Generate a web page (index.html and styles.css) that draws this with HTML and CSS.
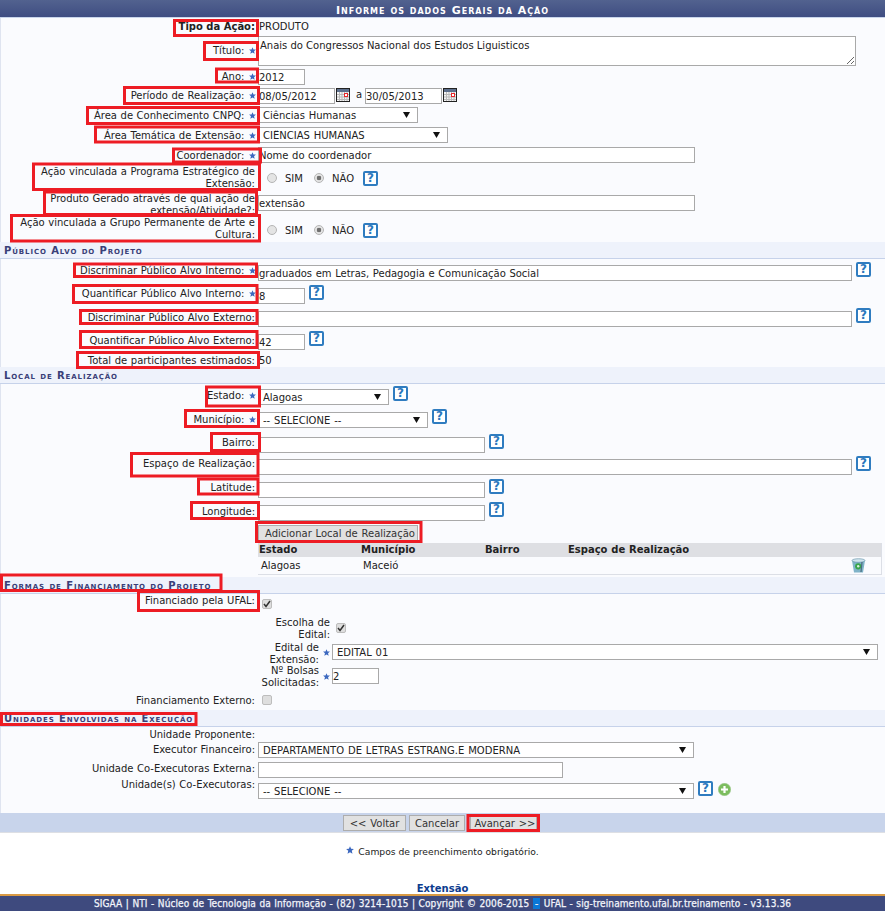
FILE: index.html
```html
<!DOCTYPE html>
<html lang="pt-BR">
<head>
<meta charset="utf-8">
<title>Informe os dados Gerais da Ação</title>
<link rel="stylesheet" href="styles.css">
</head>
<body>
<svg class="defs" width="0" height="0" aria-hidden="true">
  <symbol id="star" viewBox="0 0 10 10"><path d="M5 0.2 6.4 3.4 9.9 3.7 7.2 6 8.1 9.6 5 7.7 1.9 9.6 2.8 6 .1 3.7 3.6 3.4Z" fill="#3c68bf"/></symbol>
  <symbol id="cal" viewBox="0 0 14 14"><rect x=".5" y=".5" width="13" height="13" fill="#f4f4f4" stroke="#222"/><rect x="1" y="1" width="12" height="3" fill="#5d6f8c"/><path d="M1 6.5h12M1 9h12M1 11.5h12M3.5 4v9M6 4v9M8.500 4v9M11 4v9" stroke="#b9b9b9"/><rect x="8" y="5" width="4" height="4" fill="#e8262a"/><rect x="9" y="6" width="2" height="2" fill="#fff"/></symbol>
  <symbol id="plus" viewBox="0 0 13 13"><circle cx="6.500" cy="6.500" r="6.200" fill="#7cbd5e" stroke="#9fc98f" stroke-width=".6"/><path d="M6.500 3v7M3 6.500h7" stroke="#fff" stroke-width="2.200"/></symbol>
  <symbol id="trash" viewBox="0 0 15 15"><path d="M1 2.500 14 2.500 12 14.500 3 14.500Z" fill="#7fb3c8"/><ellipse cx="7.500" cy="2.500" rx="6.500" ry="1.800" fill="#cfe4ee" stroke="#5f8ea3" stroke-width=".6"/><circle cx="7.200" cy="8.300" r="3.100" fill="#38a54a"/><circle cx="7.200" cy="8.300" r="1.200" fill="#d8f0dc"/><path d="M11 4 10 14" stroke="#4c6f80" stroke-width="1.200"/></symbol>
</svg>

<main class="page">
  <form class="panel">
    <h1 class="caption">Informe os dados Gerais da Ação</h1>

    <div class="row r-tipo"><div class="lab strong">Tipo da Ação:</div><div class="fld val">PRODUTO</div></div>
    <div class="row r-titulo"><div class="lab">Título: <svg class="star"><use href="#star"/></svg></div><div class="fld"><textarea class="area">Anais do Congressos Nacional dos Estudos Liguisticos</textarea></div></div>
    <div class="row r-ano"><div class="lab">Ano: <svg class="star"><use href="#star"/></svg></div><div class="fld"><input class="in w47" value="2012"></div></div>
    <div class="row r-periodo"><div class="lab">Período de Realização: <svg class="star"><use href="#star"/></svg></div><div class="fld"><input class="in w77" value="08/05/2012"><svg class="cal"><use href="#cal"/></svg><span class="ate">a</span><input class="in w77" value="30/05/2013"><svg class="cal"><use href="#cal"/></svg></div></div>
    <div class="row r-area"><div class="lab">Área de Conhecimento CNPQ: <svg class="star"><use href="#star"/></svg></div><div class="fld"><select class="sel w160"><option>Ciências Humanas</option></select></div></div>
    <div class="row r-tema"><div class="lab">Área Temática de Extensão: <svg class="star"><use href="#star"/></svg></div><div class="fld"><select class="sel w190"><option>CIÊNCIAS HUMANAS</option></select></div></div>
    <div class="row r-coord"><div class="lab">Coordenador: <svg class="star"><use href="#star"/></svg></div><div class="fld"><input class="in w437" value="Nome do coordenador"></div></div>
    <div class="row r-acao"><div class="lab">Ação vinculada a Programa Estratégico de<br>Extensão:</div><div class="fld radios"><input type="radio" class="rad" name="a1"><span class="opt">SIM</span><input type="radio" class="rad rad2" name="a1" checked><span class="opt">NÃO</span><span class="help h-radio">?</span></div></div>
    <div class="row r-produto"><div class="lab">Produto Gerado através de qual ação de<br>extensão/Atividade?:</div><div class="fld"><input class="in w437" value="extensão"></div></div>
    <div class="row r-grupo"><div class="lab">Ação vinculada a Grupo Permanente de Arte e<br>Cultura:</div><div class="fld radios"><input type="radio" class="rad" name="a2"><span class="opt">SIM</span><input type="radio" class="rad rad2" name="a2" checked><span class="opt">NÃO</span><span class="help h-radio">?</span></div></div>

    <h2 class="band">Público Alvo do Projeto</h2>
    <div class="row r-dint"><div class="lab">Discriminar Público Alvo Interno: <svg class="star"><use href="#star"/></svg></div><div class="fld"><input class="in w594" value="graduados em Letras, Pedagogia e Comunicação Social"><span class="help">?</span></div></div>
    <div class="row r-qint"><div class="lab">Quantificar Público Alvo Interno: <svg class="star"><use href="#star"/></svg></div><div class="fld"><input class="in w47" value="8"><span class="help">?</span></div></div>
    <div class="row r-dext"><div class="lab">Discriminar Público Alvo Externo:</div><div class="fld"><input class="in w594"><span class="help">?</span></div></div>
    <div class="row r-qext"><div class="lab">Quantificar Público Alvo Externo:</div><div class="fld"><input class="in w47" value="42"><span class="help">?</span></div></div>
    <div class="row r-total"><div class="lab">Total de participantes estimados:</div><div class="fld val">50</div></div>

    <h2 class="band">Local de Realização</h2>
    <div class="row r-estado"><div class="lab">Estado: <svg class="star"><use href="#star"/></svg></div><div class="fld"><select class="sel w131"><option>Alagoas</option></select><span class="help">?</span></div></div>
    <div class="row r-mun"><div class="lab">Município: <svg class="star"><use href="#star"/></svg></div><div class="fld"><select class="sel w170"><option>-- SELECIONE --</option></select><span class="help">?</span></div></div>
    <div class="row r-bairro"><div class="lab">Bairro:</div><div class="fld"><input class="in w227"><span class="help">?</span></div></div>
    <div class="row r-espaco"><div class="lab">Espaço de Realização:</div><div class="fld"><input class="in w594"><span class="help">?</span></div></div>
    <div class="row r-lat"><div class="lab">Latitude:</div><div class="fld"><input class="in w227"><span class="help">?</span></div></div>
    <div class="row r-lon"><div class="lab">Longitude:</div><div class="fld"><input class="in w227"><span class="help">?</span></div></div>
    <div class="row r-add"><div class="lab"></div><div class="fld"><button type="button" class="btn b-add">Adicionar Local de Realização</button></div></div>
    <div class="row r-tab"><div class="lab"></div><div class="fld">
      <table class="locais">
        <thead><tr><th class="c1">Estado</th><th class="c2">Município</th><th class="c3">Bairro</th><th class="c4">Espaço de Realização</th><th class="c5"></th></tr></thead>
        <tbody><tr><td class="c1">Alagoas</td><td class="c2">Maceió</td><td></td><td></td><td class="c5"><svg class="trash"><use href="#trash"/></svg></td></tr></tbody>
      </table>
    </div></div>

    <h2 class="band">Formas de Financiamento do Projeto</h2>
    <div class="row r-fin"><div class="lab">Financiado pela UFAL:</div><div class="fld"><input type="checkbox" class="chk" checked></div></div>
    <div class="row sub r-esc"><div class="lab lab-a">Escolha de<br>Edital:</div><div class="fld fld-a"><input type="checkbox" class="chk" checked></div></div>
    <div class="row sub r-edi"><div class="lab lab-b">Edital de<br>Extensão: </div><svg class="star star-b"><use href="#star"/></svg><div class="fld fld-b"><select class="sel w546"><option>EDITAL 01</option></select></div></div>
    <div class="row sub r-bol"><div class="lab lab-b">Nº Bolsas<br>Solicitadas: </div><svg class="star star-b"><use href="#star"/></svg><div class="fld fld-b"><input class="in w47" value="2"></div></div>
    <div class="row r-fext"><div class="lab">Financiamento Externo:</div><div class="fld"><input type="checkbox" class="chk"></div></div>

    <h2 class="band">Unidades Envolvidas na Execução</h2>
    <div class="row r-prop"><div class="lab">Unidade Proponente:</div><div class="fld"></div></div>
    <div class="row r-exec"><div class="lab">Executor Financeiro:</div><div class="fld"><select class="sel w436"><option>DEPARTAMENTO DE LETRAS ESTRANG.E MODERNA</option></select></div></div>
    <div class="row r-coex"><div class="lab">Unidade Co-Executoras Externa:</div><div class="fld"><input class="in w305"></div></div>
    <div class="row r-unid"><div class="lab">Unidade(s) Co-Executoras:</div><div class="fld"><select class="sel w436"><option>-- SELECIONE --</option></select><span class="help h-unid">?</span><svg class="plus"><use href="#plus"/></svg></div></div>

    <div class="bar">
      <button type="button" class="btn b-volta">&lt;&lt; Voltar</button>
      <button type="button" class="btn b-canc">Cancelar</button>
      <button type="button" class="btn b-avan">Avançar &gt;&gt;</button>
    </div>
  </form>

  <p class="note"><svg class="star star-n"><use href="#star"/></svg><span>Campos de preenchimento obrigatório.</span></p>
  <p class="modulo">Extensão</p>
  <footer class="foot">SIGAA | NTI - Núcleo de Tecnologia da Informação - (82) 3214-1015 | Copyright © 2006-2015 <span class="hl">-</span> UFAL - sig-treinamento.ufal.br.treinamento - v3.13.36</footer>
</main>

<svg class="marks" width="891" height="911" aria-hidden="true">
  <rect x="174.500" y="20.500" width="83" height="15"/>
  <rect x="204.500" y="42.500" width="53" height="17"/>
  <rect x="216.500" y="69" width="41" height="13"/>
  <rect x="124.500" y="87.500" width="134" height="16"/>
  <rect x="87.500" y="107.500" width="171" height="16"/>
  <rect x="95.500" y="127" width="163" height="15"/>
  <rect x="173.500" y="149" width="87" height="13"/>
  <rect x="33.500" y="164" width="226" height="25.500"/>
  <rect x="44.500" y="192" width="212" height="22.500"/>
  <rect x="11.500" y="215.500" width="248" height="25.500"/>
  <rect x="74.500" y="264" width="182" height="12.500"/>
  <rect x="73.500" y="285.500" width="183.500" height="17"/>
  <rect x="80.500" y="310.500" width="176.500" height="13"/>
  <rect x="80.500" y="331.500" width="176.500" height="16"/>
  <rect x="77.500" y="352.500" width="181" height="15"/>
  <rect x="206.500" y="387" width="53" height="19"/>
  <rect x="185.500" y="410.500" width="73" height="16"/>
  <rect x="211.500" y="433.500" width="48" height="17"/>
  <rect x="131.500" y="453.500" width="126.500" height="22.500"/>
  <rect x="198.500" y="479" width="59.500" height="15"/>
  <rect x="191.500" y="502.500" width="67" height="16"/>
  <rect x="256.500" y="522.500" width="164.500" height="19"/>
  <rect x="1.500" y="575" width="219.500" height="15.500"/>
  <rect x="138.500" y="591.500" width="120" height="19"/>
  <rect x="1.500" y="713.500" width="194.500" height="11"/>
  <rect x="468" y="815.500" width="70.500" height="15"/>
</svg>
</body>
</html>
```

FILE: styles.css
```css
* { box-sizing: border-box; }
html, body { margin: 0; padding: 0; background: #fff; }
body { width: 891px; height: 911px; overflow: hidden; position: relative; font: 10px/12px "DejaVu Sans", Verdana, sans-serif; color: #222; }
.defs { position: absolute; }
.page { width: 885px; display: flex; flex-direction: column; }
.panel { background: #fafbfe; box-shadow: inset 1px 0 #dfe4f0; height: 833px; display: flex; flex-direction: column; }

.caption { margin: 0; height: 18px; font: small-caps bold 11px/21px "DejaVu Sans", Verdana, sans-serif; letter-spacing: 1px; color: #fff; text-align: center; background: linear-gradient(#52628f, #3f4d82); border-bottom: 1px solid #c9d5eb; }
.band { margin: 0; height: 17px; padding-left: 4px; font: small-caps bold 10px/17px "DejaVu Sans", Verdana, sans-serif; letter-spacing: .9px; color: #3a3f78; background: #eef2fb; border-bottom: 1px solid #c6d2ea; }

.row { display: grid; grid-template-columns: 258px 1fr; align-items: start; flex: none; height: var(--h); }
.lab { margin-top: var(--l); padding-right: 3px; text-align: right; white-space: nowrap; word-spacing: .4px; }
.strong { font-weight: bold; word-spacing: 0; }
.fld { margin-top: var(--f); display: flex; align-items: flex-start; }
.val { padding-left: 1px; }

.r-tipo { --h: 18px; --l: 3px; --f: 3px; }
.r-titulo { --h: 31px; --l: 9px; --f: 0px; }
.r-ano { --h: 19px; --l: 4px; --f: 2px; }
.r-periodo { --h: 19px; --l: 4px; --f: 2px; }
.r-area { --h: 20px; --l: 5px; --f: 2px; }
.r-tema { --h: 20px; --l: 5px; --f: 2px; }
.r-coord { --h: 20px; --l: 5px; --f: 2px; }
.r-acao { --h: 27px; --l: 1px; --f: 5px; }
.r-produto { --h: 23px; --l: 1px; --f: 3px; }
.r-grupo { --h: 27px; --l: 2px; --f: 7px; }
.r-dint { --h: 24px; --l: 6px; --f: 6px; }
.r-qint { --h: 25px; --l: 5px; --f: 5px; }
.r-dext { --h: 23px; --l: 4px; --f: 3px; }
.r-qext { --h: 21px; --l: 4px; --f: 3px; }
.r-total { --h: 15px; --l: 3px; --f: 3px; }
.r-estado { --h: 25px; --l: 6px; --f: 5px; }
.r-mun { --h: 25px; --l: 5px; --f: 3px; }
.r-bairro { --h: 23px; --l: 3px; --f: 3px; }
.r-espaco { --h: 23px; --l: 1px; --f: 2px; }
.r-lat { --h: 23px; --l: 2px; --f: 2px; }
.r-lon { --h: 20px; --l: 3px; --f: 2px; }
.r-add { --h: 20px; --l: 0px; --f: 2px; }
.r-tab { --h: 34px; --l: 0px; --f: 0px; }
.r-fin { --h: 21px; --l: 1px; --f: 5px; }
.r-esc { --h: 26px; --l: 2px; --f: 8px; }
.r-edi { --h: 24px; --l: 1px; --f: 3px; }
.r-bol { --h: 26px; --l: 0px; --f: 3px; }
.r-fext { --h: 19px; --l: 4px; --f: 4px; }
.r-prop { --h: 14px; --l: 2px; --f: 0px; }
.r-exec { --h: 19px; --l: 3px; --f: 1px; }
.r-coex { --h: 22px; --l: 3px; --f: 2px; }
.r-unid { --h: 31px; --l: -3px; --f: 1px; }

.sub { grid-template-columns: 319px 13px 1fr; }
.r-esc { grid-template-columns: 336px 1fr; }
.lab-a { padding-right: 6px; }
.lab-b { padding-right: 0; }

input, textarea, select, button { font: 10px/12px "DejaVu Sans", Verdana, sans-serif; color: #222; margin: 0; }
.in, .area, .sel { background: #fff; border: 1px solid #a9a9a9; border-radius: 0; outline: 0; flex: none; }
.in { height: 16px; padding: 1px 0 0 0; word-spacing: .4px; }
.area { display: block; width: 598px; height: 30px; padding: 3px 1px; resize: both; }
.sel { height: 16px; padding: 2px 12px 0 4px; word-spacing: .7px; appearance: none; background-image: url("data:image/svg+xml,%3Csvg xmlns='http://www.w3.org/2000/svg' width='7' height='6'%3E%3Cpath d='M0 0h7L3.500 6z' fill='%23111'/%3E%3C/svg%3E"); background-repeat: no-repeat; background-position: right 7px center; }
.w47 { width: 47px; }
.w77 { width: 77px; }
.w131 { width: 131px; }
.w160 { width: 160px; }
.w170 { width: 170px; }
.w190 { width: 190px; }
.w227 { width: 227px; }
.w305 { width: 305px; }
.w436 { width: 436px; }
.w437 { width: 437px; }
.w546 { width: 546px; }
.w594 { width: 594px; }

.star { width: 7px; height: 7px; margin: 0 -1px 0 1px; vertical-align: 0; }
.star-b { margin: 8px 0 0 4px; }
.cal { width: 14px; height: 14px; margin-left: 1px; flex: none; }
.ate { margin: 1px 3px 0 6px; width: 6px; }

.radios { align-items: center; height: 16px; }
.rad { appearance: none; width: 10px; height: 10px; margin: 0 0 0 9px; border: 1px solid #b5b5b5; border-radius: 50%; background: #e4e4e4; flex: none; }
.rad:checked { background: radial-gradient(circle, #6f6f6f 0 2px, #e4e4e4 2.600px); }
.rad2 { margin-left: 0; }
.opt { margin-left: 8px; width: 29px; padding-top: 2px; }
.rad2 + .opt { width: 31px; }

.chk { appearance: none; width: 10px; height: 10px; margin: 0 0 0 4px; border: 1px solid #bdbdbd; border-radius: 2px; background: #dedede url("data:image/svg+xml,%3Csvg xmlns='http://www.w3.org/2000/svg' width='8' height='8'%3E%3Cpath d='M1 4l2 2.500L7 1' fill='none' stroke='%23333' stroke-width='1.500'/%3E%3C/svg%3E") no-repeat center; }
.chk:not(:checked) { background-image: none; }
.fld-a .chk { margin-left: 0; }

.help { flex: none; width: 15px; height: 15px; margin: -3px 0 0 4px; border: 2px solid #2f7cc0; border-radius: 2px; background: #fff; color: #2b78bd; font: bold 12px/11px "DejaVu Sans", sans-serif; text-align: center; }
.h-radio { margin: 0; }
.plus { width: 13px; height: 13px; margin: 0 0 0 5px; flex: none; }
.h-unid { margin: -2px 0 0 4px; }

.btn { background: #e1e1e1; border: 1px solid #adadad; border-radius: 0; height: 16px; padding: 1px 0 0; color: #333; word-spacing: .6px; }
.b-add { width: 160px; padding-left: 4px; }
.b-volta { width: 63px; }
.b-canc { width: 56px; }
.b-avan { width: 67px; margin-left: 2px; padding-left: 3px; }

.locais { width: 624px; border-collapse: collapse; table-layout: fixed; border-bottom: 1px solid #dcdfe6; border-right: 1px solid #dcdfe6; }
.locais th { height: 13px; padding: 0 0 0 1px; background: #dedfe3; text-align: left; font: bold 10px/14px "DejaVu Sans", sans-serif; color: #222; word-spacing: .3px; }
.locais td { height: 17px; padding: 3px 0 0 3px; vertical-align: top; }
.c1 { width: 102px; }
.c2 { width: 124px; }
.c3 { width: 83px; }
.c5 { width: 34px; }
.locais .c5 { padding: 1px 0 0 3px; }
.trash { width: 15px; height: 15px; display: block; }

.bar { margin-top: auto; height: 20px; display: flex; justify-content: center; gap: 3px; padding: 2px 5px 0 0; background: #c8d4eb; border-bottom: 1px solid #dddfe4; }

.note { margin: 0; height: 33px; padding: 13px 0 0; display: flex; justify-content: center; gap: 4px; font-size: 9.200px; }
.star-n { width: 8px; height: 8px; margin: 0; }
.modulo { margin: 0; height: 28px; padding-top: 17px; text-align: center; font-weight: bold; color: #0d3c8e; }
.foot { height: 17px; border-top: 2px solid #d99a44; background: #3e4a7e; color: #f2f4fa; text-align: center; font-family: "DejaVu Sans", sans-serif; font-stretch: condensed; font-size: 10px; line-height: 16px; letter-spacing: .1px; word-spacing: .5px; white-space: nowrap; -webkit-text-stroke: .25px #f2f4fa; }
.hl { background: #0a78d7; padding: 0 2px; }

.marks { position: absolute; left: 0; top: 0; pointer-events: none; }
.marks rect { fill: none; stroke: #ed1c24; stroke-width: 3; }
```
